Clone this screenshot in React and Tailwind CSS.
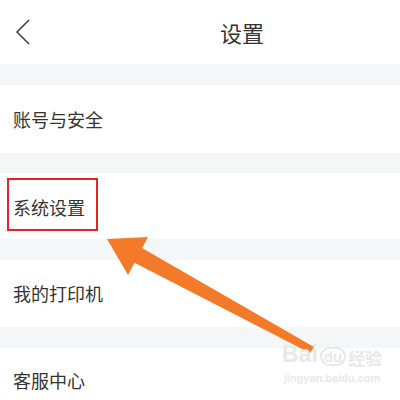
import React from 'react';

const rows = ['账号与安全', '系统设置', '我的打印机', '客服中心'];

const Gap = () => <div className="h-[21px] bg-[#f5f6f8]" />;

export default function App() {
    return (
        <div
            className="relative w-[400px] h-[400px] overflow-hidden bg-white text-[#333]"
            style={{ fontFamily: '"Noto Sans CJK SC", "Noto Sans", sans-serif' }}
        >
            {/* Header */}
            <div className="h-[64px] flex items-center">
                <svg width="20" height="30" viewBox="0 0 20 30" className="ml-[13px]">
                    <path d="M16 3 L4 15 L16 27" fill="none" stroke="#444" strokeWidth="1.6" />
                </svg>
                <div className="ml-[187px] text-[22px] leading-none">设置</div>
            </div>

            <Gap />
            <div className="h-[68px] flex items-center pl-[13px] text-[18px]">{rows[0]}</div>
            <div className="h-[20px] bg-[#f5f6f8]" />
            {/* highlighted row */}
            <div className="h-[66px] pt-[5px] pl-[7px] text-[18px]">
                <div className="w-[91px] h-[53px] border-2 border-[#e8202a] flex items-center pl-[4px] pt-[5px]">
                    {rows[1]}
                </div>
            </div>
            <Gap />
            <div className="h-[67px] flex items-center pl-[13px] text-[18px]">{rows[2]}</div>
            <Gap />
            <div className="h-[64px] flex items-center pl-[13px] text-[18px]">{rows[3]}</div>

            {/* Annotation arrow */}
            <svg className="absolute left-0 top-0" width="400" height="400" viewBox="0 0 400 400">
                <polygon points="107,239 148,237 128,275" fill="#f47a2a" />
                <polygon points="133,262 142,248 314,347 310,353" fill="#f47a2a" />
            </svg>

            {/* Watermark */}
            <div className="absolute left-[282px] top-[343px] flex flex-col items-center text-[#e8e8e8]">
                <div className="flex items-end gap-[2px] leading-none">
                    <span className="text-[23px] font-bold" style={{ fontFamily: '"Liberation Sans", sans-serif' }}>Bai</span>
                    <span className="text-[15px] font-bold rounded-full border-2 border-[#e8e8e8] px-[2px]" style={{ fontFamily: '"Liberation Sans", sans-serif' }}>du</span>
                    <span className="text-[17px] font-bold">经验</span>
                </div>
                <div className="text-[11px] font-bold mt-[4px]" style={{ fontFamily: '"Liberation Sans", sans-serif' }}>jingyan.baidu.com</div>
            </div>
        </div>
    );
}
